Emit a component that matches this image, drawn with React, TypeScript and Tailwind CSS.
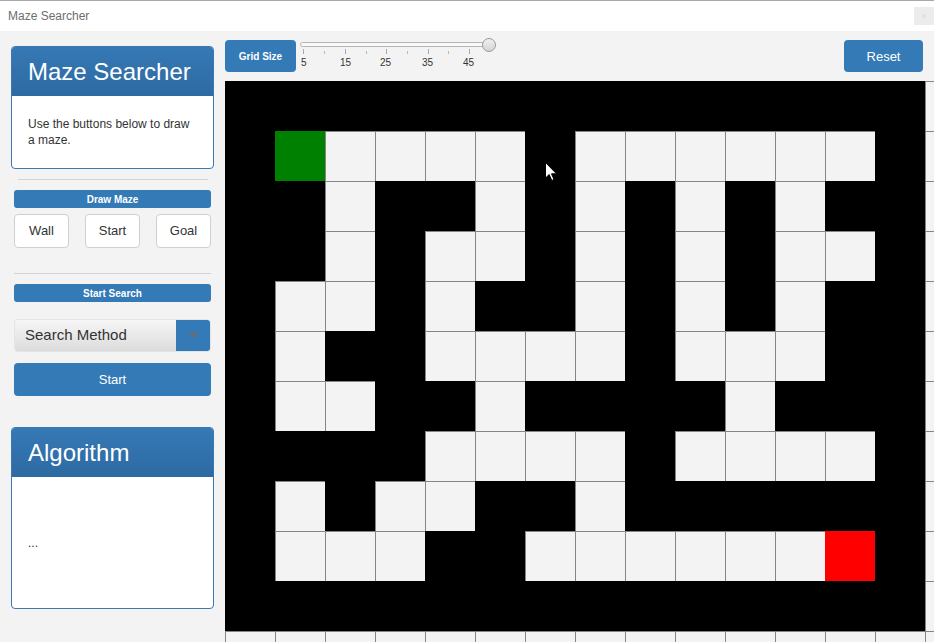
import React from "react";

const MAZE: string[] = [
  "BBBBBBBBBBBBBBL",
  "BGWWWWBWWWWWWBL",
  "BBWBBWBWBWBWBBL",
  "BBWBWWBWBWBWWBL",
  "BWWBWBBWBWBWBBL",
  "BWBBWWWWBWWWBBL",
  "BWWBBWBBBBWBBBL",
  "BBBBWWWWBWWWWBL",
  "BWBWWBBWBBBBBBL",
  "BWWWBBWWWWWWRBL",
  "BBBBBBBBBBBBBBL",
  "LLLLLLLLLLLLLLL",
];

function cellClass(c: string) {
  switch (c) {
    case "B":
      return "bg-black border-black";
    case "G":
      return "bg-[#008000] border-[#008000]";
    case "R":
      return "bg-[#ff0000] border-[#ff0000]";
    default:
      return "bg-[#f3f3f3] border-[#858585]";
  }
}

function PanelHeader({ title }: { title: string }) {
  return (
    <div className="h-[49px] flex items-center pl-[16px] bg-gradient-to-b from-[#3679b5] to-[#2d6aa2] text-white text-[24px] leading-none">
      {title}
    </div>
  );
}

function Bar({ label }: { label: string }) {
  return (
    <div className="mx-[3px] h-[18px] rounded-[3px] bg-[#337ab7] text-white text-[10px] font-bold flex items-center justify-center">
      {label}
    </div>
  );
}

export default function App() {
  const font = { fontFamily: '"Liberation Sans", Arial, sans-serif' };
  const majors = [3, 45, 86, 128, 169];
  const minors = [24, 66, 107, 148];
  const labels = [
    { t: "5", x: 1 },
    { t: "15", x: 40 },
    { t: "25", x: 80 },
    { t: "35", x: 122 },
    { t: "45", x: 163 },
  ];
  return (
    <div
      className="w-[934px] h-[642px] overflow-hidden bg-[#f3f3f3] flex flex-col"
      style={font}
    >
      {/* title bar */}
      <div className="h-[31px] shrink-0 bg-white border-t border-[#a9a9a9] flex items-center justify-between pl-[8px]">
        <span className="text-[12px] text-[#6e6e6e]">Maze Searcher</span>
        <div className="w-[20px] h-[18px] bg-[#ececec] flex items-center justify-center text-[8px] text-[#d6d6d6] leading-none">
          x
        </div>
      </div>

      <div className="flex flex-1 min-h-0">
        {/* sidebar */}
        <div className="w-[225px] shrink-0 px-[11px] pt-[15px] flex flex-col">
          <div className="border border-[#3b78b2] rounded-[4px] overflow-hidden bg-white">
            <PanelHeader title="Maze Searcher" />
            <div className="h-[72px] flex items-center pl-[16px]">
              <p className="w-[168px] text-[12px] leading-[16px] text-[#333]">
                Use the buttons below to draw a maze.
              </p>
            </div>
          </div>

          <div className="mt-[10px] ml-[7px] mr-[6px] h-px bg-[#d2d2d2]" />
          <div className="mt-[10px]">
            <Bar label="Draw Maze" />
          </div>
          <div className="mt-[6px] mx-[3px] flex justify-between">
            {["Wall", "Start", "Goal"].map((b) => (
              <div
                key={b}
                className="w-[55px] h-[34px] bg-white border border-[#cfcfcf] rounded-[4px] flex items-center justify-center text-[13px] text-[#333]"
              >
                {b}
              </div>
            ))}
          </div>

          <div className="mt-[25px] mx-[3px] h-px bg-[#d2d2d2]" />
          <div className="mt-[10px]">
            <Bar label="Start Search" />
          </div>

          <div className="mt-[17px] mx-[3px] h-[33px] rounded-[4px] border border-[#e4e4e4] bg-gradient-to-b from-[#f6f6f6] to-[#dcdcdc] flex items-center justify-between">
            <span className="pl-[10px] text-[15px] text-[#333]">Search Method</span>
            <div className="w-[34px] h-[31px] bg-[#337ab7] rounded-r-[3px] flex items-center justify-center">
              <svg width="9" height="5" viewBox="0 0 9 5">
                <path d="M0 0 L9 0 L4.5 5 Z" fill="#6b6b6b" />
              </svg>
            </div>
          </div>

          <div className="mt-[11px] mx-[3px] h-[33px] rounded-[4px] bg-[#337ab7] text-white text-[13px] flex items-center justify-center">
            Start
          </div>

          <div className="mt-[31px] h-[182px] border border-[#3b78b2] rounded-[4px] overflow-hidden bg-white flex flex-col">
            <PanelHeader title="Algorithm" />
            <div className="flex-1 flex items-center pl-[16px] text-[12px] text-[#333]">
              ...
            </div>
          </div>
        </div>

        {/* main */}
        <div className="flex-1 min-w-0 flex flex-col">
          <div className="pt-[9px] pr-[11px] flex items-start shrink-0">
            <div className="w-[71px] h-[32px] rounded-[4px] bg-[#337ab7] text-white text-[10px] font-bold flex items-center justify-center">
              Grid Size
            </div>
            <div className="relative ml-[4px] w-[200px] h-[32px]">
              <div className="absolute left-0 top-[2px] w-[190px] h-[5px] rounded-full border border-[#b5b5b5] bg-[#f8f8f8]" />
              <div className="absolute left-[182px] top-[-2px] w-[14px] h-[14px] rounded-full border border-[#9a9a9a] bg-gradient-to-b from-[#f0f0f0] to-[#d4d4d4]" />
              {majors.map((x) => (
                <div
                  key={"M" + x}
                  className="absolute top-[9px] w-px h-[5px] bg-[#a8a8a8]"
                  style={{ left: x }}
                />
              ))}
              {minors.map((x) => (
                <div
                  key={"m" + x}
                  className="absolute top-[11px] w-px h-[3px] bg-[#b8b8b8]"
                  style={{ left: x }}
                />
              ))}
              {labels.map((l) => (
                <span
                  key={l.t}
                  className="absolute top-[17px] text-[10px] leading-[11px] text-[#333]"
                  style={{ left: l.x }}
                >
                  {l.t}
                </span>
              ))}
            </div>
            <div className="ml-auto w-[79px] h-[32px] rounded-[4px] bg-[#337ab7] text-white text-[13px] flex items-center justify-center pt-px">
              Reset
            </div>
          </div>

          <div className="mt-[9px] flex-1 min-h-0 overflow-hidden relative">
            <div className="flex flex-col w-[750px]">
              {MAZE.map((row, r) => (
                <div key={r} className="flex">
                  {row.split("").map((c, i) => (
                    <div
                      key={i}
                      className={
                        "w-[50px] h-[50px] shrink-0 box-border border-l border-t " +
                        cellClass(c)
                      }
                    />
                  ))}
                </div>
              ))}
            </div>
            <svg
              className="absolute left-[320px] top-[81px]"
              width="13"
              height="20"
              viewBox="0 0 13 20"
            >
              <path
                d="M0.5 0.5 L0.5 16 L4.2 12.5 L6.8 18.5 L9 17.5 L6.5 11.8 L11.5 11.8 Z"
                fill="#fff"
                stroke="#000"
                strokeWidth="1"
              />
            </svg>
          </div>
        </div>
      </div>
    </div>
  );
}
